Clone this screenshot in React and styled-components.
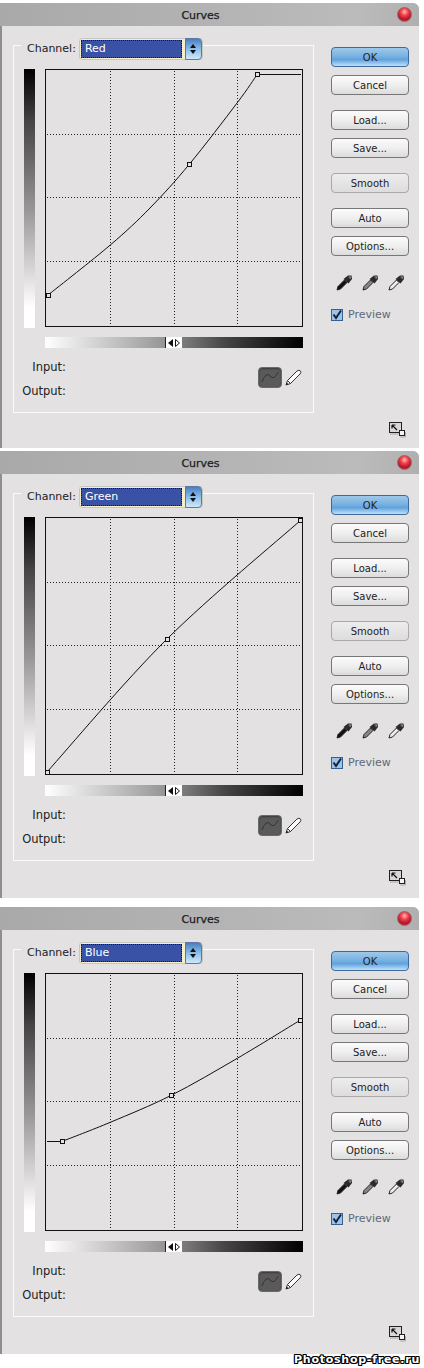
import React from "react";
import styled, { createGlobalStyle } from "styled-components";

const Global = createGlobalStyle`
  html, body { margin: 0; padding: 0; background: #fff; }
  body { width: 424px; height: 1368px; overflow: hidden; font-family: "DejaVu Sans", Tahoma, sans-serif; }
`;
const Page = styled.div`
  position: relative;
  width: 424px;
  height: 1368px;
  padding-top: 3px;
  box-sizing: border-box;
  display: flex;
  flex-direction: column;
`;
const Dialog = styled.section`
  width: 419px;
  height: ${(p) => p.$height}px;
  margin-bottom: ${(p) => p.$gap}px;
  background: #e3e1e1;
  border-left: 2px solid #8f8f8f;
  box-sizing: border-box;
  border-top-right-radius: 6px;
  display: flex;
  flex-direction: column;
  flex: none;
`;
const TitleBar = styled.header`
  height: 23px;
  margin-left: -2px;
  padding: 1px 18px 0 0;
  box-sizing: border-box;
  flex: none;
  position: relative;
  display: flex;
  align-items: center;
  justify-content: center;
  background: linear-gradient(90deg, #a9a9a9 0%, #b2b2b2 45%, #bbbbbb 85%, #b0b0b0 100%);
  border-top-right-radius: 6px;
  font-size: 11px;
  font-weight: 400;
  color: #1c1c1c;
  -webkit-text-stroke: 0.25px #1c1c1c;
`;
const CloseBall = styled.span`
  position: absolute;
  right: 7px;
  top: 4px;
  width: 13px;
  height: 13px;
  border-radius: 50%;
  border: 1px solid #8c6a6a;
  background: radial-gradient(circle at 50% 30%, #ffb6b6 0%, #ee3b46 35%, #b3122a 70%, #e95a64 100%);
`;
const Body = styled.div`
  display: flex;
  padding: 19px 0 0 11px;
  flex: none;
`;
const Group = styled.div`
  position: relative;
  width: 301px;
  height: 368px;
  box-sizing: border-box;
  border: 1px solid #fbfbfb;
  padding: 23px 0 0 10px;
  display: flex;
  flex-direction: column;
`;
const Legend = styled.div`
  position: absolute;
  left: 7px;
  top: -8px;
  padding: 0 0 0 6px;
  display: flex;
  align-items: center;
  gap: 3px;
  background: #e3e1e1;
`;
const Label = styled.span`
  font-size: ${(p) => (p.$large ? 11.5 : 11)}px;
  color: #222;
  line-height: 14px;
`;
const Select = styled.div`
  width: 124px;
  height: 22px;
  box-sizing: border-box;
  display: flex;
  border-radius: 3px;
  background: #f6eec9;
  border: 1px solid #c9c6bd;
  padding: 1px 0 1px 1px;
`;
const SelectValue = styled.div`
  flex: 1;
  background: #3a52a6;
  outline: 1px dotted #11163a;
  outline-offset: -1px;
  color: #fff;
  font-size: 11px;
  line-height: 18px;
  padding-left: 4px;
`;
const Stepper = styled.div`
  width: 15px;
  margin: -2px 0 -2px 3px;
  border: 1px solid #5b78a8;
  border-radius: 0 4px 4px 0;
  background: linear-gradient(#4a7fc0 0%, #8fc3ec 55%, #cfe8f9 100%);
  display: flex;
  flex-direction: column;
  align-items: center;
  justify-content: center;
  gap: 2px;
`;
const Arrow = styled.i`
  width: 0;
  height: 0;
  border-left: 3px solid transparent;
  border-right: 3px solid transparent;
  ${(p) => (p.$up ? "border-bottom: 4px solid #111;" : "border-top: 4px solid #111;")}
`;
const GraphRow = styled.div`
  display: flex;
  align-items: flex-start;
  gap: 10px;
`;
const VRamp = styled.div`
  width: 11px;
  height: 259px;
  background: linear-gradient(#000 0%, #444 20%, #999 55%, #fff 92%);
`;
const GraphSvg = styled.svg`
  display: block;
  flex: none;
`;
const HRampRow = styled.div`
  margin: 9px 0 0 21px;
  width: 258px;
  height: 11px;
  position: relative;
  background: linear-gradient(90deg, #fff 0%, #999 45%, #444 70%, #000 100%);
`;
const RampThumb = styled.div`
  position: absolute;
  left: 120px;
  top: 0;
  width: 17px;
  height: 11px;
  box-sizing: border-box;
  background: #fff;
  border-left: 1px solid #222;
  display: flex;
  align-items: center;
  justify-content: center;
  gap: 2px;
`;
const Tri = styled.i`
  width: 0;
  height: 0;
  border-top: 4px solid transparent;
  border-bottom: 4px solid transparent;
  border-right: 5px solid #111;
`;
const TriOutline = styled.svg`
  display: block;
`;
const ReadoutRow = styled.div`
  display: flex;
  justify-content: space-between;
  margin-top: 12px;
  width: 279px;
`;
const Readouts = styled.div`
  width: 44px;
  margin-left: -2px;
  display: flex;
  flex-direction: column;
  align-items: flex-end;
  gap: 10px;
`;
const Tools = styled.div`
  display: flex;
  align-items: center;
  gap: 3px;
  margin: 6px 1px 0 0;
  height: 22px;
`;
const CurveToggle = styled.div`
  width: 24px;
  height: 21px;
  border-radius: 4px;
  background: #5a5a5a;
  border: 1px solid #6a6a6a;
  box-sizing: border-box;
  box-shadow: inset 0 1px 2px #3b3b3b;
  display: flex;
  align-items: center;
  justify-content: center;
`;
const Side = styled.aside`
  margin-left: 17px;
  padding-top: 2px;
  width: 78px;
  display: flex;
  flex-direction: column;
  gap: 15px;
`;
const Stack = styled.div`
  display: flex;
  flex-direction: column;
  gap: 8px;
`;
const Button = styled.div`
  height: 20px;
  box-sizing: border-box;
  border-radius: 4px;
  border: 1px solid ${(p) => (p.$primary ? "#3d6a9e" : p.$muted ? "#a9a9a9" : "#777")};
  background: ${(p) =>
    p.$primary
      ? "linear-gradient(#9fc8ea 0%, #79b2e2 45%, #5fa2de 65%, #c1e0f5 100%)"
      : p.$muted
      ? "linear-gradient(#ededed, #dedcdc)"
      : "linear-gradient(#fbfbfb 0%, #efefef 50%, #dcdcdc 100%)"};
  font-size: 10px;
  line-height: 19px;
  text-align: center;
  color: #222;
`;
const Droppers = styled.div`
  display: flex;
  justify-content: space-between;
  padding: 0 4px 0 5px;
  margin-top: 3px;
`;
const PreviewRow = styled.div`
  display: flex;
  align-items: center;
  gap: 5px;
  margin-top: 2px;
  font-size: 11px;
  color: #5a6a7e;
`;
const Check = styled.svg`
  display: block;
`;
const Footer = styled.div`
  display: flex;
  justify-content: flex-end;
  padding: 8px 13px 0 0;
`;
const Watermark = styled.div`
  position: absolute;
  right: 4px;
  bottom: 2px;
  font-family: "DejaVu Sans", sans-serif;
  font-weight: 700;
  font-size: 11px;
  letter-spacing: 0.75px;
  color: #fff;
  text-shadow: 1px 0 0 #000, -1px 0 0 #000, 0 1px 0 #000, 0 -1px 0 #000, 1px 1px 0 #000, -1px -1px 0 #000, 1px -1px 0 #000, -1px 1px 0 #000;
`;

function spline(pts) {
  let d = `M${pts[0][0]},${pts[0][1]}`;
  for (let i = 0; i < pts.length - 1; i++) {
    const p0 = pts[Math.max(i - 1, 0)];
    const p1 = pts[i];
    const p2 = pts[i + 1];
    const p3 = pts[Math.min(i + 2, pts.length - 1)];
    d += ` C${p1[0] + (p2[0] - p0[0]) / 6},${p1[1] + (p2[1] - p0[1]) / 6} ${p2[0] - (p3[0] - p1[0]) / 6},${p2[1] - (p3[1] - p1[1]) / 6} ${p2[0]},${p2[1]}`;
  }
  return d;
}

function Graph({ curve, marks, tail, head }) {
  const grid = [65.5, 129.5, 192.5];
  const hgrid = [65.5, 128.5, 192.5];
  return (
    <GraphSvg width="258" height="258" viewBox="0 0 258 258">
      <rect x="0.5" y="0.5" width="257" height="257" fill="#e3e1e1" stroke="#111" />
      {grid.map((x) => (
        <line key={x} x1={x} y1="2" x2={x} y2="256" stroke="#222" strokeDasharray="1 2" />
      ))}
      {hgrid.map((y) => (
        <line key={y} x1="2" y1={y} x2="256" y2={y} stroke="#222" strokeDasharray="1 2" />
      ))}
      {head && <line x1="2" y1={head[1]} x2={head[0]} y2={head[1]} stroke="#111" />}
      {tail && <line x1={tail[0]} y1={tail[1]} x2="256" y2={tail[1]} stroke="#111" />}
      <path d={spline(curve)} fill="none" stroke="#111" strokeWidth="1" />
      {marks.map(([x, y]) => (
        <rect key={x} x={Math.round(x) - 1.5} y={Math.round(y) - 1.5} width="4" height="4" fill="#e3e1e1" stroke="#111" />
      ))}
    </GraphSvg>
  );
}

function Dropper({ tone }) {
  return (
    <svg width="17" height="17" viewBox="0 0 17 17">
      <path d="M1 16 L2 12.5 L8.5 6 L11 8.5 L4.5 15 Z" fill={tone} stroke="#222" strokeWidth="1" />
      <path d="M7.5 5 L12 1.5 L15.5 1.5 L16 5 L12.5 9.5 Z" fill="#2a2a2a" />
      <path d="M12.5 3 L14.5 2.8 L14 5" stroke="#9a9a9a" strokeWidth="1" fill="none" />
    </svg>
  );
}

function Pencil() {
  return (
    <svg width="17" height="17" viewBox="0 0 17 17">
      <path d="M1 16 L2.5 11.5 L12 2 Q14 0.5 15.5 2 Q16.5 3.5 15 5 L5.5 14.5 Z" fill="#fff" stroke="#333" strokeWidth="1" />
      <path d="M2.5 11.5 L5.5 14.5" stroke="#333" />
      <path d="M1 16 L1.8 13.5 L3.5 15.2 Z" fill="#222" />
    </svg>
  );
}

function ResizeIcon() {
  return (
    <svg width="17" height="17" viewBox="0 0 17 17">
      <rect x="0.5" y="1.5" width="12" height="10" fill="#d8d8d8" stroke="#222" />
      <path d="M3 4 L8 9 M3 4 H6.5 M3 4 V7.5" stroke="#111" strokeWidth="1.2" fill="none" />
      <rect x="10.5" y="9.5" width="5" height="5" fill="#f4f4f4" stroke="#222" />
      <path d="M1 13 H10 M16.5 11 V16 H11" stroke="#aaa" fill="none" />
    </svg>
  );
}

function Panel({ channel, curve, marks, tail, head, height, gap }) {
  return (
    <Dialog $height={height} $gap={gap}>
      <TitleBar>
        Curves
        <CloseBall />
      </TitleBar>
      <Body>
        <Group>
          <Legend>
            <Label>Channel:</Label>
            <Select>
              <SelectValue>{channel}</SelectValue>
              <Stepper>
                <Arrow $up />
                <Arrow />
              </Stepper>
            </Select>
          </Legend>
          <GraphRow>
            <VRamp />
            <Graph curve={curve} marks={marks} tail={tail} head={head} />
          </GraphRow>
          <HRampRow>
            <RampThumb>
              <Tri />
              <TriOutline width="5" height="8" viewBox="0 0 5 8">
                <path d="M0.5 0.5 L4.5 4 L0.5 7.5 Z" fill="#fff" stroke="#111" />
              </TriOutline>
            </RampThumb>
          </HRampRow>
          <ReadoutRow>
            <Readouts>
              <Label $large>Input:</Label>
              <Label $large>Output:</Label>
            </Readouts>
            <Tools>
              <CurveToggle>
                <svg width="18" height="14" viewBox="0 0 18 14">
                  <path d="M1 12 Q5 1 9 6 T17 2" fill="none" stroke="#333" strokeWidth="1" />
                </svg>
              </CurveToggle>
              <Pencil />
            </Tools>
          </ReadoutRow>
        </Group>
        <Side>
          <Stack>
            <Button $primary>OK</Button>
            <Button>Cancel</Button>
          </Stack>
          <Stack>
            <Button>Load...</Button>
            <Button>Save...</Button>
          </Stack>
          <Button $muted>Smooth</Button>
          <Stack>
            <Button>Auto</Button>
            <Button>Options...</Button>
          </Stack>
          <Droppers>
            <Dropper tone="#111" />
            <Dropper tone="#888" />
            <Dropper tone="#eee" />
          </Droppers>
          <PreviewRow>
            <Check width="12" height="12" viewBox="0 0 12 12">
              <rect x="0.5" y="0.5" width="11" height="11" fill="#9cc3e8" stroke="#35608f" />
              <path d="M2.5 5.5 L5 9 L10 1.5" fill="none" stroke="#14233f" strokeWidth="2" />
            </Check>
            Preview
          </PreviewRow>
        </Side>
      </Body>
      <Footer>
        <ResizeIcon />
      </Footer>
    </Dialog>
  );
}

export default function App() {
  return (
    <Page>
      <Global />
      <Panel
        channel="Red"
        height={445}
        gap={3}
        curve={[[2.7, 226.3], [65.3, 176], [105, 139], [144.3, 95.3], [192.3, 33.7], [212.3, 5.3]]}
        marks={[[3, 226], [144, 95], [212, 5]]}
        tail={[212, 5.5]}
      />
      <Panel
        channel="Green"
        height={447}
        gap={9}
        curve={[[2, 255], [122, 122], [256, 3]]}
        marks={[[2, 255], [122, 122], [255, 3]]}
      />
      <Panel
        channel="Blue"
        height={447}
        gap={0}
        curve={[[17.3, 168.3], [65.3, 149.3], [126.3, 122.3], [192.3, 85.3], [255, 47.3]]}
        marks={[[17, 168], [126, 122], [255, 47]]}
        head={[17, 168.5]}
      />
      <Watermark>Photoshop-free.ru</Watermark>
    </Page>
  );
}
